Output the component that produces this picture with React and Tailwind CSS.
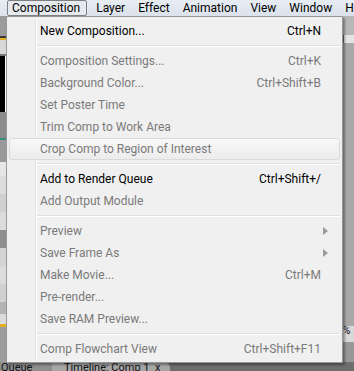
import React from "react";

const MENU_BAR = ["Composition", "Layer", "Effect", "Animation", "View", "Window", "H"];

const GROUPS = [
  [{ label: "New Composition...", key: "Ctrl+N", on: true }],
  [
    { label: "Composition Settings...", key: "Ctrl+K" },
    { label: "Background Color...", key: "Ctrl+Shift+B" },
    { label: "Set Poster Time" },
    { label: "Trim Comp to Work Area" },
    { label: "Crop Comp to Region of Interest", hover: true },
  ],
  [
    { label: "Add to Render Queue", key: "Ctrl+Shift+/", on: true },
    { label: "Add Output Module" },
  ],
  [
    { label: "Preview", sub: true },
    { label: "Save Frame As", sub: true },
    { label: "Make Movie...", key: "Ctrl+M" },
    { label: "Pre-render..." },
    { label: "Save RAM Preview..." },
  ],
  [{ label: "Comp Flowchart View", key: "Ctrl+Shift+F11" }],
];

function MenuItem({ item }) {
  return (
    <div
      className={
        "relative flex h-[22px] items-center mx-[2px] pl-[30px] pr-[18px] " +
        (item.hover
          ? "rounded-[3px] border border-[#dadada] bg-gradient-to-b from-[#f8f8f8] to-[#ececec]"
          : "border border-transparent") +
        (item.on ? " text-black" : " text-[#7a7a7a]")
      }
    >
      <span className="flex-1 whitespace-nowrap">{item.label}</span>
      {item.key && <span className="whitespace-nowrap">{item.key}</span>}
      {item.sub && (
        <svg width="5" height="8" viewBox="0 0 5 8" className="absolute right-[11px]">
          <path d="M0 0 L5 4 L0 8 Z" fill="#9a9a9a" />
        </svg>
      )}
    </div>
  );
}

export default function App() {
  return (
    <div
      className="relative w-[354px] h-[371px] overflow-hidden bg-[#a3a3a3] text-[12px] leading-none"
      style={{ fontFamily: 'Roboto, "Noto Sans", sans-serif' }}
    >
      {/* menu bar */}
      <div className="flex h-[16px] items-center bg-gradient-to-b from-[#e8edf4] to-[#dbe2ec] pl-[7px] text-black">
        {MENU_BAR.map((m, i) => (
          <div
            key={m}
            className={
              "flex h-[16px] shrink-0 items-center px-[3px] mr-[5px] " +
              (i === 0 ? "rounded-[2px] border border-[#7f7f7f] bg-[#e6e9ee] pl-[4px] pr-[6px]" : "border border-transparent")
            }
          >
            {m}
          </div>
        ))}
      </div>

      {/* app behind the menu */}
      <div className="flex h-[346px]">
        <div className="flex w-[6px] flex-col text-[10px] text-black">
          <div className="h-[20px] bg-[#9c9c9c]" />
          <div className="h-[2px] bg-[#3a3a3a]" />
          <div className="h-[2px] bg-[#e0b020]" />
          <div className="h-[14px] bg-[#d8d8d8]" />
          <div className="h-[2px] bg-[#777]" />
          <div className="h-[56px] bg-black border-r border-white" />
          <div className="h-[26px] bg-[#8c8c8c]" />
          <div className="h-[2px] bg-[#3c8c80]" />
          <div className="h-[22px] bg-[#9a9a9a]" />
          <div className="h-[14px] bg-[#e6e6e6]" />
          <div className="h-[18px] bg-[#dcdcdc]" />
          <div className="h-[18px] bg-[#d0d0d0]" />
          <div className="h-[18px] bg-[#dcdcdc]" />
          <div className="h-[18px] bg-[#8e8e8e]" />
          <div className="h-[18px] bg-[#d4d4d4]" />
          <div className="h-[18px] bg-[#dcdcdc]" />
          <div className="h-[18px] bg-[#d0d0d0]" />
          <div className="h-[12px] bg-[#b4b4b4]" />
          <div className="h-[10px] bg-[#dcdcdc]" />
          <div className="h-[3px] bg-[#e0b020]" />
          <div className="flex-1 bg-[#9c9c9c]" />
        </div>
        <div className="flex-1" />
        <div className="flex w-[11px] flex-col">
          <div className="h-[19px] bg-[#b8b8b8]" />
          <div className="h-[8px] border-l border-[#666] bg-[#e4e4e4]" />
          <div className="flex-1 bg-[#a8a8a8]" />
          <div className="h-[16px] bg-[#d8d8d8] text-[10px]">%</div>
          <div className="h-[20px] bg-[#989898]" />
        </div>
      </div>

      {/* bottom tab strip */}
      <div className="flex h-[9px] bg-[#6e6e6e] text-[11px] leading-[12px] text-[#111]">
        <div className="w-[52px] overflow-hidden bg-[#8e8e8e] pl-[1px]">Queue</div>
        <div className="w-[118px] overflow-hidden rounded-tr-[6px] bg-[#a6a6a6] pl-[12px]">Timeline: Comp 1 &nbsp;x</div>
      </div>

      {/* dropdown */}
      <div className="absolute left-[6px] top-[16px] w-[337px] border border-[#979797] bg-[#f0f0f0] pt-[3px] pb-[2px] shadow-[2px_2px_2px_rgba(0,0,0,0.35)]">
        <div className="absolute bottom-[2px] left-[28px] top-[2px] w-[2px] border-l border-[#e2e3e3] bg-white" />
        {GROUPS.map((g, gi) => (
          <div key={gi}>
            {gi > 0 && (
              <div className="relative ml-[30px] mr-[2px] my-[3px] h-[2px] border-t border-[#e0e0e0] bg-white" />
            )}
            {g.map((it) => (
              <MenuItem key={it.label} item={it} />
            ))}
          </div>
        ))}
      </div>
    </div>
  );
}
